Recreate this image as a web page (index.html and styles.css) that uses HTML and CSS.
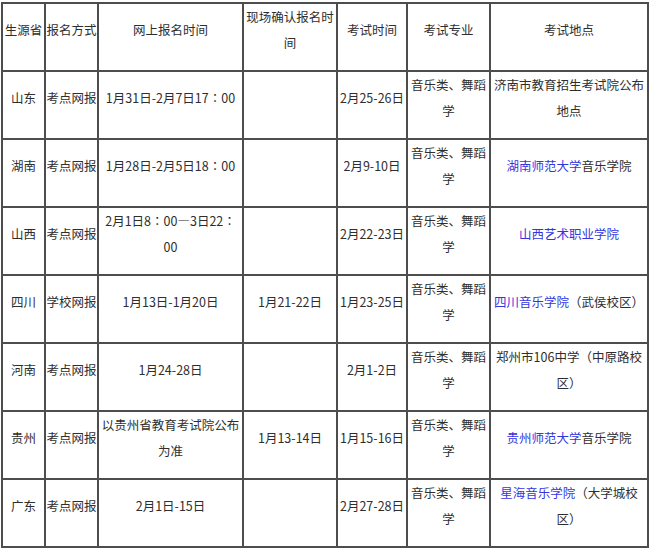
FILE: index.html
```html
<!DOCTYPE html>
<html lang="zh-CN">
<head>
<meta charset="utf-8">
<title>艺术类考试安排</title>
<link rel="stylesheet" href="styles.css">
</head>
<body>
<table class="exam">
  <colgroup>
    <col class="c1"><col class="c2"><col class="c3"><col class="c4"><col class="c5"><col class="c6"><col class="c7">
  </colgroup>
  <tr>
    <td><p>生源省</p></td>
    <td><p>报名方式</p></td>
    <td><p>网上报名时间</p></td>
    <td><p>现场确认报名时间</p></td>
    <td><p>考试时间</p></td>
    <td><p>考试专业</p></td>
    <td><p>考试地点</p></td>
  </tr>
  <tr>
    <td><p>山东</p></td>
    <td><p>考点网报</p></td>
    <td><p>1月31日-2月7日17<span class="colon" lang="zh-TW">：</span>00</p></td>
    <td><p></p></td>
    <td><p>2月25-26日</p></td>
    <td><p>音乐类、舞蹈学</p></td>
    <td><p>济南市教育招生考试院公布地点</p></td>
  </tr>
  <tr>
    <td><p>湖南</p></td>
    <td><p>考点网报</p></td>
    <td><p>1月28日-2月5日18<span class="colon" lang="zh-TW">：</span>00</p></td>
    <td><p></p></td>
    <td><p>2月9-10日</p></td>
    <td><p>音乐类、舞蹈学</p></td>
    <td><p><a class="link">湖南师范大学</a>音乐学院</p></td>
  </tr>
  <tr>
    <td><p>山西</p></td>
    <td><p>考点网报</p></td>
    <td><p>2月1日8<span class="colon" lang="zh-TW">：</span>00—3日22<span class="colon" lang="zh-TW">：</span>00</p></td>
    <td><p></p></td>
    <td><p>2月22-23日</p></td>
    <td><p>音乐类、舞蹈学</p></td>
    <td><p><a class="link">山西艺术职业学院</a></p></td>
  </tr>
  <tr>
    <td><p>四川</p></td>
    <td><p>学校网报</p></td>
    <td><p>1月13日-1月20日</p></td>
    <td><p>1月21-22日</p></td>
    <td><p>1月23-25日</p></td>
    <td><p>音乐类、舞蹈学</p></td>
    <td><p><a class="link">四川音乐学院</a>（武侯校区）</p></td>
  </tr>
  <tr>
    <td><p>河南</p></td>
    <td><p>考点网报</p></td>
    <td><p>1月24-28日</p></td>
    <td><p></p></td>
    <td><p>2月1-2日</p></td>
    <td><p>音乐类、舞蹈学</p></td>
    <td><p>郑州市106中学（中原路校区）</p></td>
  </tr>
  <tr>
    <td><p>贵州</p></td>
    <td><p>考点网报</p></td>
    <td><p>以贵州省教育考试院公布为准</p></td>
    <td><p>1月13-14日</p></td>
    <td><p>1月15-16日</p></td>
    <td><p>音乐类、舞蹈学</p></td>
    <td><p><a class="link">贵州师范大学</a>音乐学院</p></td>
  </tr>
  <tr>
    <td><p>广东</p></td>
    <td><p>考点网报</p></td>
    <td><p>2月1日-15日</p></td>
    <td><p></p></td>
    <td><p>2月27-28日</p></td>
    <td><p>音乐类、舞蹈学</p></td>
    <td><p><a class="link">星海音乐学院</a>（大学城校区）</p></td>
  </tr>
</table>
</body>
</html>
```

FILE: styles.css
```css
html, body {
  margin: 0;
  padding: 0;
  background: #ffffff;
}

body {
  font-family: "Noto Sans CJK SC", "Microsoft YaHei", sans-serif;
  font-size: 12.5px;
  color: #2e2e2e;
}

.exam {
  margin: 2px 0 0 1px;
  border-collapse: separate;
  border-spacing: 0;
  border: 1px solid #4d4d4d;
  table-layout: fixed;
  width: 648px;
}

.c1 { width: 43px; }
.c2 { width: 53px; }
.c3 { width: 145px; }
.c4 { width: 94px; }
.c5 { width: 70px; }
.c6 { width: 83px; }
.c7 { width: 158px; }

.exam td {
  box-sizing: border-box;
  height: 68px;
  border: 1px solid #4d4d4d;
  padding: 0;
  text-align: center;
  vertical-align: middle;
}

.exam p {
  margin: 0 0 14px;
  line-height: 26px;
  min-height: 26px;
}

.colon {
  font-family: "Noto Sans CJK TC", "Noto Sans CJK SC", sans-serif;
}

.link {
  color: #3535e0;
  text-decoration: none;
}
```
